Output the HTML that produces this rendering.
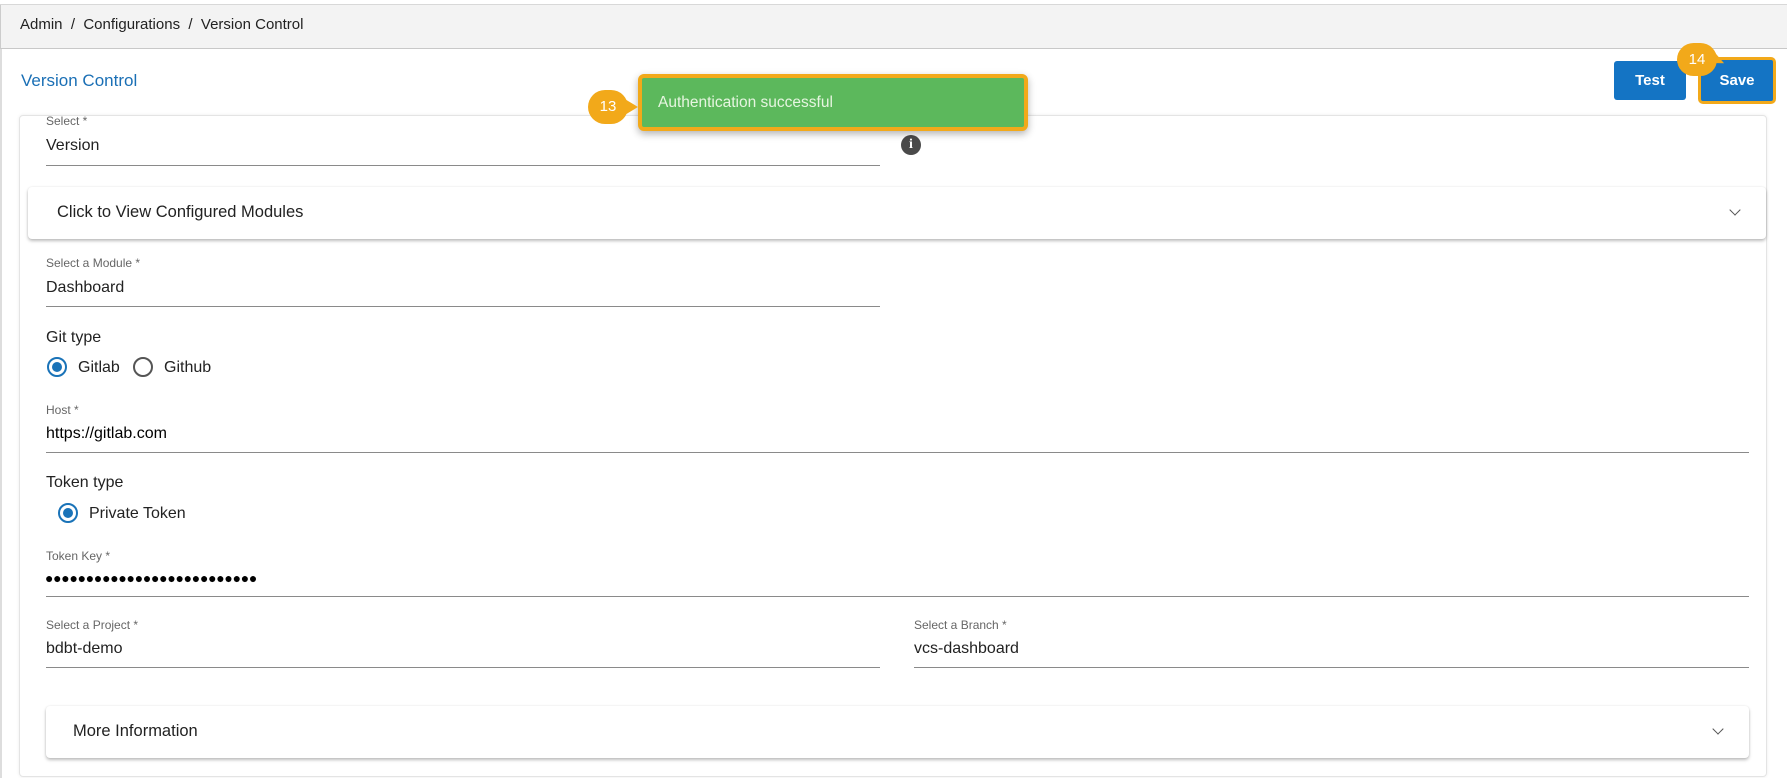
<!DOCTYPE html>
<html><head><meta charset="utf-8"><style>
*{box-sizing:border-box;margin:0;padding:0}
body{width:1787px;height:778px;background:#fff;font-family:"Liberation Sans",sans-serif;color:#222;position:relative;overflow:hidden}
.abs{position:absolute}
.lbl{position:absolute;font-size:12px;color:#666}
.val{position:absolute;font-size:16px;color:#222}
.line{position:absolute;height:1px;background:#8a8a8a}
.radio{position:absolute;width:20px;height:20px;border-radius:50%;border:2px solid #555}
.radio.on{border-color:#1a73b8}
.radio.on::after{content:"";position:absolute;left:3px;top:3px;width:10px;height:10px;border-radius:50%;background:#1a73b8}
.acc{position:absolute;background:#fff;border-radius:4px;box-shadow:0 2px 3px rgba(0,0,0,.25),0 0 2px rgba(0,0,0,.08)}
.chev{position:absolute;width:8px;height:8px;border-right:1.5px solid #555;border-bottom:1.5px solid #555;transform:rotate(45deg)}
</style></head><body>
<div class="abs" style="left:0;top:0;width:1787px;height:5px;background:#fff;border-bottom:1px solid #d8d8d8"></div>
<div class="abs" style="left:0;top:5px;width:1787px;height:44px;background:#f3f3f3;border-bottom:1px solid #c8c8c8;border-left:1px solid #ccc"></div>
<div class="abs" style="left:20px;top:16px;font-size:15px;color:#222">Admin &nbsp;/&nbsp; Configurations &nbsp;/&nbsp; Version Control</div>
<div class="abs" style="left:0;top:49px;width:2px;height:729px;background:#ddd"></div>
<div class="abs" style="left:21px;top:71px;font-size:17px;color:#1a6fb5">Version Control</div>

<div class="abs" style="left:1614px;top:61px;width:72px;height:39px;background:#1474c4;border-radius:3px;color:#fff;font-weight:bold;font-size:15px;text-align:center;line-height:39px">Test</div>
<div class="abs" style="left:1698px;top:57px;width:78px;height:47px;border:3px solid #f2a91a;border-radius:5px;background:#1474c4;color:#fff;font-weight:bold;font-size:15px;text-align:center;line-height:41px">Save</div>
<div class="abs" style="left:1705px;top:50px;width:0;height:0;border-left:20px solid #f2a91a;border-top:9px solid transparent;border-bottom:9px solid transparent;transform:rotate(25deg)"></div>
<div class="abs" style="left:1677px;top:43px;width:40px;height:33px;background:#f2a91a;border-radius:17px;color:#fff;font-size:15px;text-align:center;line-height:33px">14</div>

<div class="abs" style="left:19px;top:115px;width:1748px;height:662px;border:1px solid #e4e4e4;border-radius:4px;box-shadow:0 0 3px rgba(0,0,0,.08)"></div>

<div class="lbl" style="left:46px;top:114px">Select *</div>
<div class="val" style="left:46px;top:137px">Version</div>
<div class="line" style="left:46px;top:165px;width:834px"></div>
<div class="abs" style="left:901px;top:135px;width:20px;height:20px;border-radius:50%;background:#4a4a4a;color:#fff;font-weight:bold;font-size:14px;text-align:center;line-height:20px;font-family:'Liberation Serif',serif">i</div>

<div class="acc" style="left:28px;top:187px;width:1738px;height:52px"><div class="abs" style="left:29px;top:16px;font-size:16.5px">Click to View Configured Modules</div><div class="chev" style="left:1703px;top:19px"></div></div>

<div class="lbl" style="left:46px;top:256px">Select a Module *</div>
<div class="val" style="left:46px;top:279px">Dashboard</div>
<div class="line" style="left:46px;top:306px;width:834px"></div>

<div class="val" style="left:46px;top:329px">Git type</div>
<div class="radio on" style="left:47px;top:357px"></div>
<div class="val" style="left:78px;top:359px">Gitlab</div>
<div class="radio" style="left:133px;top:357px"></div>
<div class="val" style="left:164px;top:359px">Github</div>

<div class="lbl" style="left:46px;top:403px">Host *</div>
<div class="val" style="left:46px;top:425px;color:#000">https://gitlab.com</div>
<div class="line" style="left:46px;top:452px;width:1703px"></div>

<div class="val" style="left:46px;top:474px">Token type</div>
<div class="radio on" style="left:58px;top:503px"></div>
<div class="val" style="left:89px;top:505px">Private Token</div>

<div class="lbl" style="left:46px;top:549px">Token Key *</div>
<div class="val" style="left:45px;top:570px;font-size:14px;letter-spacing:-0.3px;color:#000">●●●●●●●●●●●●●●●●●●●●●●●●●●</div>
<div class="line" style="left:46px;top:596px;width:1703px"></div>

<div class="lbl" style="left:46px;top:618px">Select a Project *</div>
<div class="val" style="left:46px;top:640px">bdbt-demo</div>
<div class="line" style="left:46px;top:667px;width:834px"></div>
<div class="lbl" style="left:914px;top:618px">Select a Branch *</div>
<div class="val" style="left:914px;top:640px">vcs-dashboard</div>
<div class="line" style="left:914px;top:667px;width:835px"></div>

<div class="acc" style="left:46px;top:706px;width:1703px;height:52px"><div class="abs" style="left:27px;top:16px;font-size:16.5px">More Information</div><div class="chev" style="left:1668px;top:19px"></div></div>

<div class="abs" style="left:638px;top:74px;width:390px;height:57px;background:#5cb85c;border:4px solid #f2a91a;border-radius:6px;box-shadow:0 3px 8px rgba(0,0,0,.3)"><div class="abs" style="left:16px;top:16px;font-size:15.5px;color:#e6f5e0">Authentication successful</div></div>
<div class="abs" style="left:588px;top:90px;width:40px;height:34px;background:#f2a91a;border-radius:17px;color:#fff;font-size:15px;text-align:center;line-height:34px">13</div>
<div class="abs" style="left:618px;top:95px;width:0;height:0;border-left:20px solid #f2a91a;border-top:12px solid transparent;border-bottom:12px solid transparent"></div>
</body></html>
